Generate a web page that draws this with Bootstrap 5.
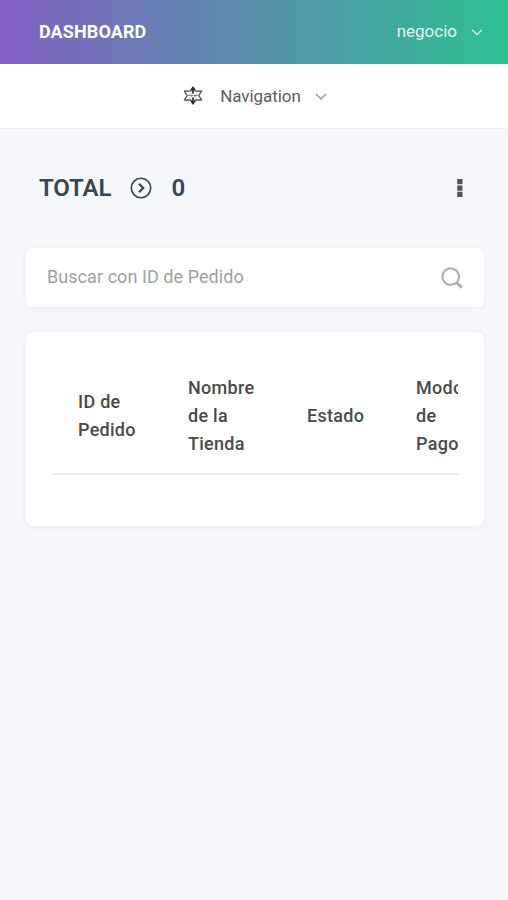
<!DOCTYPE html>
<html lang="es">
<head>
<meta charset="utf-8">
<meta name="viewport" content="width=device-width, initial-scale=1">
<title>Dashboard</title>
<link rel="stylesheet" href="https://cdn.jsdelivr.net/npm/bootstrap@5.3.0/dist/css/bootstrap.min.css">
<style>
body{font-family:Roboto,"Liberation Sans",sans-serif;background:#f5f7fb;color:#333;font-size:17px;min-height:100vh}
.topbar{height:64px;background:linear-gradient(to right,#8360c3,#2ebf91);padding:0 25px 0 39px}
.brand{font-size:18px;font-weight:700;color:#fff;letter-spacing:.1px;margin-top:-2px}
.account{font-size:17px;color:#e0f4ef;gap:14px}
.subnav{height:65px;background:#fff;border-bottom:1px solid #e9ebef;color:#5c5c5c;font-size:17px;padding-left:2px}
.subnav-label{margin:1px 14px 0 17px;letter-spacing:-.05px}
.page-head{height:60px;margin:29px 44px 30px 39px;color:#37474f}
.total{font-size:24px;font-weight:600;gap:19px;letter-spacing:-.1px}
.panel{background:#fff;border-radius:8px;box-shadow:0 1px 6px rgba(40,50,80,.06);margin:0 24px 0 26px}
.search{height:59px;padding:0 21px;border-radius:6px}
.search input{font-size:18px;color:#333;outline:0;min-width:0;letter-spacing:.06px;margin-top:-2px}
.search input::placeholder{color:#a0a0a0;opacity:1}
.orders{margin-top:25px;height:194px;padding:26px}
.scroller{overflow:hidden}
.orders table{width:560px;table-layout:fixed}
.orders th{font-size:18px;font-weight:500;line-height:28px;padding:16px 26px 15px;vertical-align:middle;color:#4a4a4a;border-bottom:2px solid #ededef;letter-spacing:.28px}
</style>
<script src="https://cdn.jsdelivr.net/npm/bootstrap@5.3.0/dist/js/bootstrap.bundle.min.js"></script>
</head>
<body>
<header class="topbar d-flex align-items-center justify-content-between">
  <span class="brand">DASHBOARD</span>
  <a class="account d-flex align-items-center text-decoration-none" href="#">negocio
    <svg width="12" height="7" viewBox="0 0 12 7" fill="none" stroke="currentColor" stroke-width="1.1"><path d="M1.300 1L6 5.700 10.700 1"/></svg>
  </a>
</header>
<nav class="subnav d-flex align-items-center justify-content-center">
  <svg width="20" height="20" viewBox="0 0 20 20" fill="none" stroke="#555" stroke-width="1.400" stroke-linejoin="round"><path d="M10 1.500l2.300 3.600 6.300-.1L15.800 9.500l2.800 4.500-6.300-.1L10 17.500l-2.300-3.600-6.300.1L4.200 9.500 1.400 5l6.300.1z"/><path d="M4.500 9.500h11" stroke="#888" stroke-width="1"/><path d="M6 7.200l8 4.600M14 7.200l-8 4.600" stroke="#aaa" stroke-width=".8"/><path d="M10 1.500v6M10 11.500v6" stroke="#333" stroke-width="1.800"/><path d="M10 0L7.200 4h5.600zM10 19l-2.800-4h5.600z" fill="#333" stroke="none"/></svg>
  <span class="subnav-label">Navigation</span>
  <svg width="12" height="7" viewBox="0 0 12 7" fill="none" stroke="#888" stroke-width="1.100"><path d="M1 1l5 5 5-5"/></svg>
</nav>
<main>
  <div class="page-head d-flex align-items-center justify-content-between">
    <h1 class="total d-flex align-items-center m-0"><span>TOTAL</span>
      <svg width="22" height="22" viewBox="0 0 22 22" fill="none" stroke="currentColor" stroke-width="1.600"><circle cx="11" cy="11" r="9.700"/><path d="M9 6.800l4.200 4.200L9 15.200" stroke-width="2.300"/></svg>
      <span>0</span></h1>
    <svg width="8" height="20" viewBox="0 0 8 20" fill="#555"><path d="M1.200 1h5.300v5.300H1.200zM1.200 7.400h5.300v5.300H1.200zM1.200 13.800h5.300v5.300H1.200z"/></svg>
  </div>
  <div class="panel search d-flex align-items-center">
    <input class="border-0 bg-transparent p-0 flex-grow-1" type="text" placeholder="Buscar con ID de Pedido" aria-label="Buscar con ID de Pedido">
    <svg width="22" height="22" viewBox="0 0 22 22" fill="none" stroke="#b0b0b0"><circle cx="9.700" cy="9.700" r="8.300" stroke-width="2.200"/><path d="M15.800 15.800l5 5" stroke-width="3"/></svg>
  </div>
  <section class="panel orders">
    <div class="scroller">
      <table>
        <colgroup><col style="width:110px"><col style="width:119px"><col style="width:109px"><col></colgroup>
        <thead><tr><th>ID de<br>Pedido</th><th>Nombre<br>de la<br>Tienda</th><th>Estado</th><th>Modo<br>de<br>Pago</th></tr></thead>
      </table>
    </div>
  </section>
</main>
</body>
</html>
